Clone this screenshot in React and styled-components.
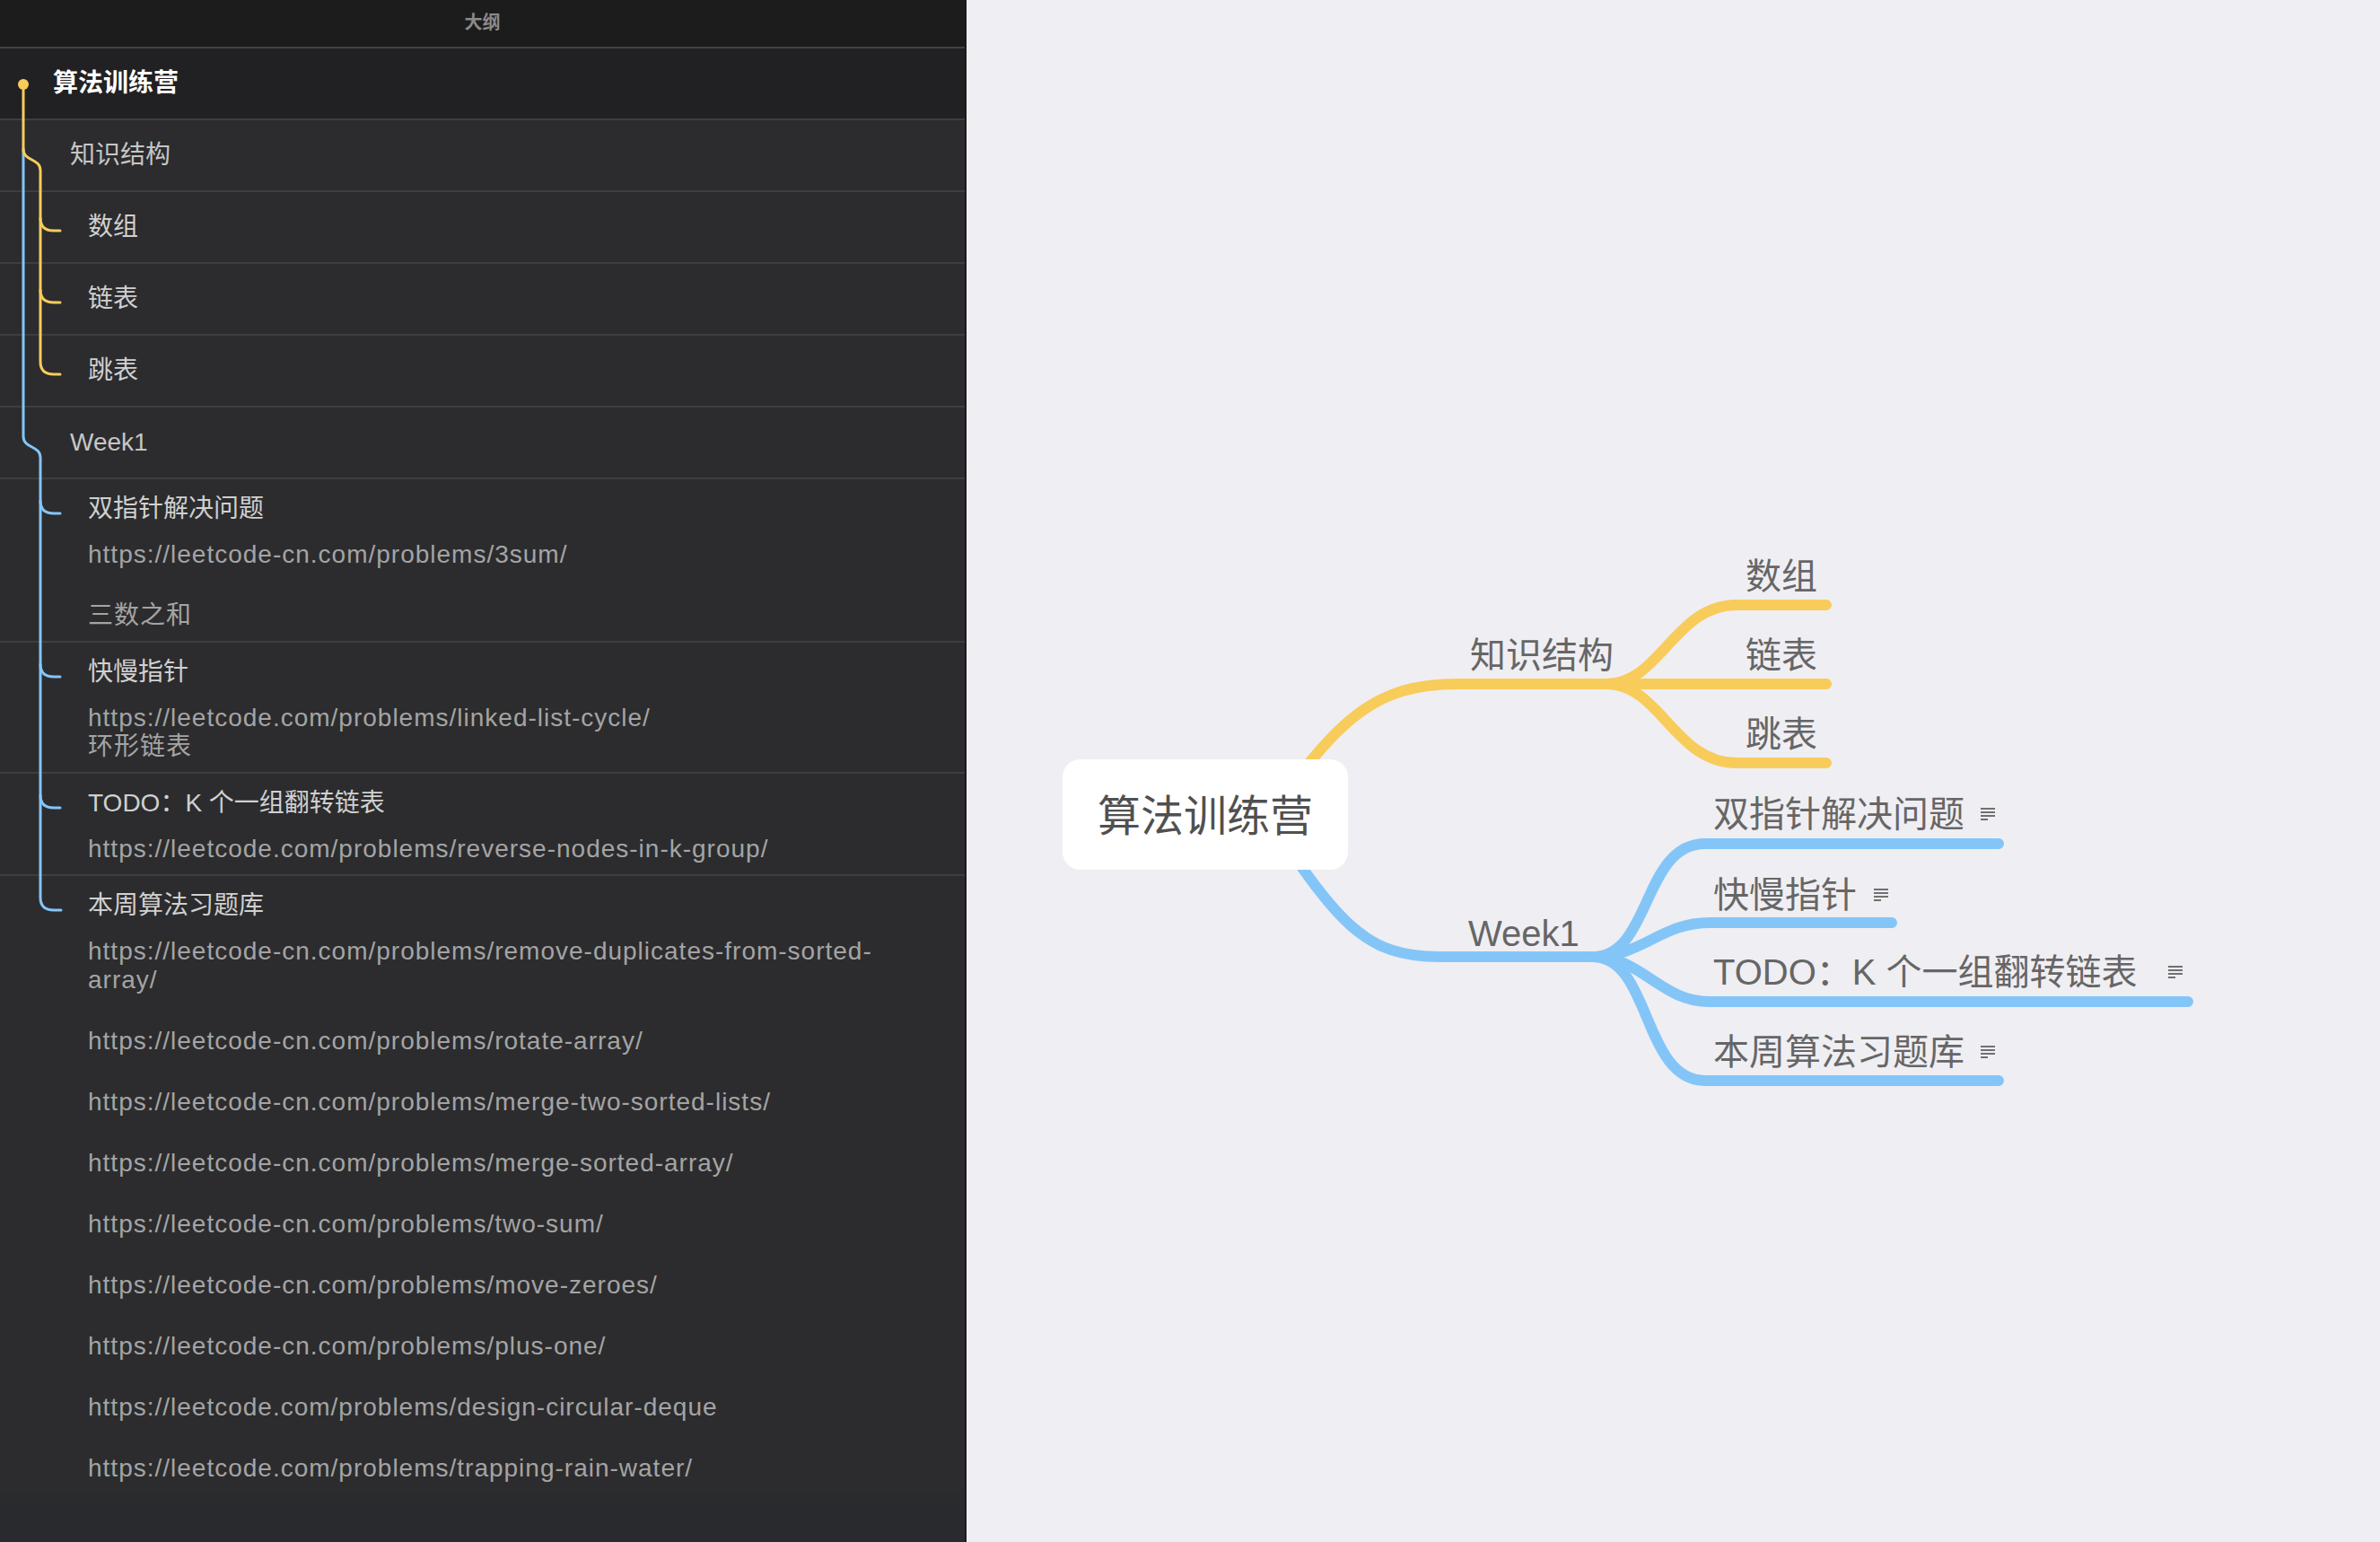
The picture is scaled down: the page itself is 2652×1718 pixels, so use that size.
import React from "react";
import styled, { createGlobalStyle } from "styled-components";

const CANVAS_X = 1077;

const GlobalStyle = createGlobalStyle`
  html, body, #root {
    margin: 0;
    padding: 0;
    height: 100%;
  }
  body {
    overflow: hidden;
    font-family: "Liberation Sans", "Noto Sans CJK SC", sans-serif;
    background: #efeef3;
  }
`;

// outline data
const outline = [
  { level: 0, title: "算法训练营" },
  { level: 1, title: "知识结构" },
  { level: 2, title: "数组" },
  { level: 2, title: "链表" },
  { level: 2, title: "跳表" },
  { level: 1, title: "Week1" },
  {
    level: 2,
    title: "双指针解决问题",
    notes: [["https://leetcode-cn.com/problems/3sum/"], ["三数之和"]],
  },
  {
    level: 2,
    title: "快慢指针",
    notes: [["https://leetcode.com/problems/linked-list-cycle/", "环形链表"]],
  },
  {
    level: 2,
    title: "TODO：K 个一组翻转链表",
    notes: [["https://leetcode.com/problems/reverse-nodes-in-k-group/"]],
  },
  {
    level: 2,
    title: "本周算法习题库",
    notes: [
      ["https://leetcode-cn.com/problems/remove-duplicates-from-sorted-array/"],
      ["https://leetcode-cn.com/problems/rotate-array/"],
      ["https://leetcode-cn.com/problems/merge-two-sorted-lists/"],
      ["https://leetcode-cn.com/problems/merge-sorted-array/"],
      ["https://leetcode-cn.com/problems/two-sum/"],
      ["https://leetcode-cn.com/problems/move-zeroes/"],
      ["https://leetcode-cn.com/problems/plus-one/"],
      ["https://leetcode.com/problems/design-circular-deque"],
      ["https://leetcode.com/problems/trapping-rain-water/"],
    ],
  },
];

const YELLOW = "#f8cc5b";
const BLUE = "#84c5f8";

const OutlineTree = () => {
  // quarter bend from the trunk into a child row
  const bend = (x, y) => `M${x} ${y - 14} Q${x} ${y} ${x + 15} ${y} H${x + 22}`;
  return (
    <TreeSvg width="120" height="1718" viewBox="0 0 120 1718">
      <g fill="none" strokeWidth="3" strokeLinecap="round">
        <path
          stroke={BLUE}
          d={`M26 166 V486 C26 500 45 496 45 510 V1000 Q45 1014 60 1014 H68`}
        />
        <path stroke={BLUE} d={bend(45, 572)} />
        <path stroke={BLUE} d={bend(45, 754)} />
        <path stroke={BLUE} d={bend(45, 900)} />
        <path
          stroke={YELLOW}
          d={`M26 94 V166 C26 180 45 176 45 190 V403 Q45 417 60 417 H67`}
        />
        <path stroke={YELLOW} d={bend(45, 257)} />
        <path stroke={YELLOW} d={bend(45, 337)} />
      </g>
      <circle cx="26" cy="94" r="6" fill={YELLOW} />
    </TreeSvg>
  );
};

const NoteIcon = () => (
  <svg width="16" height="14" viewBox="0 0 16 14">
    <g fill="#707070">
      <rect x="0" y="0" width="16" height="2" />
      <rect x="0" y="4" width="16" height="2" />
      <rect x="0" y="8" width="16" height="2" />
      <rect x="0" y="12" width="8" height="2" />
    </g>
  </svg>
);

const mapNodes = [
  { x: 1638, y: 730, text: "知识结构" },
  { x: 1945, y: 642, text: "数组" },
  { x: 1945, y: 730, text: "链表" },
  { x: 1945, y: 818, text: "跳表" },
  { x: 1636, y: 1040, text: "Week1" },
  { x: 1909, y: 907, text: "双指针解决问题", note: 18 },
  { x: 1909, y: 997, text: "快慢指针", note: 19 },
  { x: 1909, y: 1083, text: "TODO：K 个一组翻转链表", note: 34 },
  { x: 1909, y: 1172, text: "本周算法习题库", note: 18 },
];

const MindMap = () => (
  <Canvas>
    <MapSvg viewBox={`${CANVAS_X} 0 1575 1718`} width="1575" height="1718">
      <g fill="none" strokeWidth="12" strokeLinecap="round">
        <path stroke={YELLOW} d="M1400 930 C1490 800 1530 762 1625 762 H1812" />
        <path stroke={YELLOW} d="M1790 762 C1850 762 1866 674 1935 674 H2035" />
        <path stroke={YELLOW} d="M1790 762 H2035" />
        <path stroke={YELLOW} d="M1790 762 C1850 762 1866 850 1935 850 H2035" />
        <path stroke={BLUE} d="M1400 890 C1490 1030 1520 1066 1605 1066 H1790" />
        <path stroke={BLUE} d="M1775 1066 C1840 1066 1830 940 1900 940 H2227" />
        <path stroke={BLUE} d="M1775 1066 C1830 1066 1850 1028 1905 1028 H2108" />
        <path stroke={BLUE} d="M1775 1066 C1830 1066 1850 1116 1905 1116 H2438" />
        <path stroke={BLUE} d="M1775 1066 C1840 1066 1830 1204 1900 1204 H2227" />
      </g>
    </MapSvg>
    <RootTopic>算法训练营</RootTopic>
    {mapNodes.map((n) => (
      <Topic key={n.text} $x={n.x - CANVAS_X} $y={n.y} $gap={n.note}>
        {n.text}
        {n.note && <NoteIcon />}
      </Topic>
    ))}
  </Canvas>
);

const App = () => (
  <>
    <GlobalStyle />
    <Window>
      <Sidebar>
        <SidebarHeader>大纲</SidebarHeader>
        <List>
          <OutlineTree />
          {outline.map((item, i) =>
            item.notes ? (
              <NoteRow key={i} $level={item.level}>
                <Title $level={item.level}>{item.title}</Title>
                <Notes>
                  {item.notes.map((para, j) => (
                    <p key={j}>
                      {para.map((line, k) => (
                        <React.Fragment key={k}>
                          {k > 0 && <br />}
                          {line}
                        </React.Fragment>
                      ))}
                    </p>
                  ))}
                </Notes>
              </NoteRow>
            ) : (
              <Row key={i} $level={item.level}>
                <Title $level={item.level}>{item.title}</Title>
              </Row>
            )
          )}
        </List>
      </Sidebar>
      <MindMap />
    </Window>
  </>
);

// Styled Components
const indent = [59, 78, 98];
const titleColor = ["#ffffff", "#c6c6c6", "#d0d0d0"];

const Window = styled.div`
  display: flex;
  width: 2652px;
  height: 1718px;
`;

const Sidebar = styled.aside`
  width: 1075px;
  flex-shrink: 0;
  display: flex;
  flex-direction: column;
  background: linear-gradient(#2c2c2e 90%, #282a2d);
  border-right: 2px solid #1b1b1c;
`;

const SidebarHeader = styled.header`
  height: 54px;
  flex-shrink: 0;
  box-sizing: border-box;
  padding-bottom: 6px;
  display: flex;
  align-items: center;
  justify-content: center;
  background: #1c1c1c;
  border-bottom: 2px solid #424244;
  color: #8a8a8a;
  font-size: 20px;
  font-weight: 700;
`;

const List = styled.div`
  position: relative;
  display: flex;
  flex-direction: column;
`;

const TreeSvg = styled.svg`
  position: absolute;
  top: -54px;
  left: 0;
  pointer-events: none;
  z-index: 1;
`;

const Row = styled.div`
  height: 78px;
  display: flex;
  align-items: center;
  padding-left: ${(p) => indent[p.$level]}px;
  background: ${(p) => (p.$level === 0 ? "#212123" : "#2c2c2e")};
  border-bottom: 2px solid #3e3e40;
`;

const NoteRow = styled.div`
  padding: 15px 72px 12px ${(p) => indent[p.$level]}px;
  background: #2c2c2e;
  border-bottom: 2px solid #3e3e40;

  &:last-child {
    border-bottom: none;
  }
`;

const Title = styled.div`
  font-size: 28px;
  line-height: 36px;
  color: ${(p) => titleColor[p.$level]};
  font-weight: ${(p) => (p.$level === 0 ? 700 : 400)};
`;

const Notes = styled.div`
  margin-top: 17px;
  font-size: 28px;
  line-height: 32px;
  letter-spacing: 1px;
  color: #a4a4a4;

  p {
    margin: 0;
  }
  p + p {
    margin-top: 36px;
  }
`;

const Canvas = styled.main`
  position: relative;
  flex: 1;
  background: #efeef3;
  overflow: hidden;
`;

const MapSvg = styled.svg`
  position: absolute;
  top: 0;
  left: 0;
`;

const RootTopic = styled.div`
  position: absolute;
  left: ${1184 - CANVAS_X}px;
  top: 846px;
  width: 318px;
  height: 123px;
  box-sizing: border-box;
  padding-bottom: 6px;
  display: flex;
  align-items: center;
  justify-content: center;
  background: #ffffff;
  border-radius: 20px;
  color: #505050;
  font-size: 48px;
`;

const Topic = styled.div`
  position: absolute;
  left: ${(p) => p.$x}px;
  top: ${(p) => p.$y}px;
  transform: translateY(-50%);
  display: flex;
  align-items: center;
  gap: ${(p) => p.$gap || 0}px;
  white-space: nowrap;
  font-size: 40px;
  line-height: 48px;
  color: #666666;
`;

export default App;
